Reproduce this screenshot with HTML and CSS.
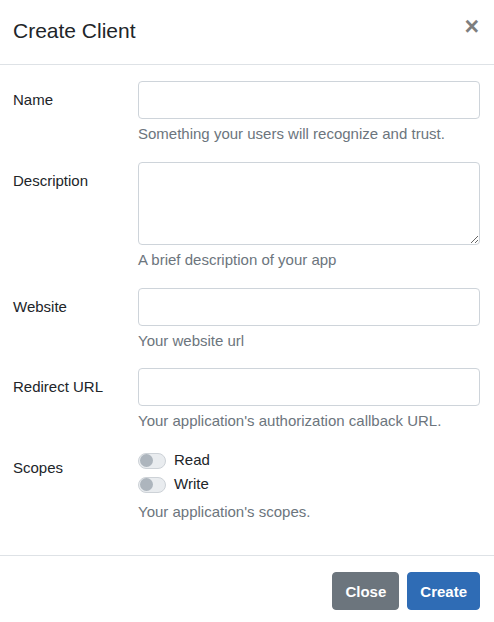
FILE: index.html
```html
<!DOCTYPE html>
<html lang="en">
<head>
<meta charset="utf-8">
<title>Create Client</title>
<link rel="stylesheet" href="styles.css">
</head>
<body>
<div class="modal">
  <div class="modal-header">
    <h5 class="modal-title">Create Client</h5>
    <button class="close" type="button" aria-label="Close">×</button>
  </div>
  <form class="modal-body">
    <div class="form-row">
      <label class="col-label" for="name">Name</label>
      <div class="field">
        <input id="name" class="form-control" type="text">
        <small class="help">Something your users will recognize and trust.</small>
      </div>
    </div>
    <div class="form-row">
      <label class="col-label" for="desc">Description</label>
      <div class="field">
        <textarea id="desc" class="form-control textarea"></textarea>
        <small class="help">A brief description of your app</small>
      </div>
    </div>
    <div class="form-row">
      <label class="col-label" for="site">Website</label>
      <div class="field">
        <input id="site" class="form-control" type="text">
        <small class="help">Your website url</small>
      </div>
    </div>
    <div class="form-row">
      <label class="col-label" for="redir">Redirect URL</label>
      <div class="field">
        <input id="redir" class="form-control" type="text">
        <small class="help">Your application's authorization callback URL.</small>
      </div>
    </div>
    <div class="form-row">
      <span class="col-label">Scopes</span>
      <div class="field">
        <label class="switch"><span class="track"><span class="knob"></span></span>Read</label>
        <label class="switch"><span class="track"><span class="knob"></span></span>Write</label>
        <small class="help">Your application's scopes.</small>
      </div>
    </div>
  </form>
  <div class="modal-footer">
    <button class="btn btn-secondary" type="button">Close</button>
    <button class="btn btn-primary" type="button">Create</button>
  </div>
</div>
</body>
</html>
```
FILE: styles.css
```css
* { box-sizing: border-box; }
html, body {
  margin: 0;
  background: #fff;
}
body {
  font-family: "Liberation Sans", Arial, sans-serif;
  font-size: 15px;
  line-height: 1.5;
  color: #212529;
}
.modal {
  width: 494px;
}
.modal-header {
  display: flex;
  align-items: flex-start;
  justify-content: space-between;
  padding: 16px 13px 18px 13px;
  border-bottom: 1px solid #dee2e6;
}
.modal-title {
  margin: 0;
  font-size: 21px;
  font-weight: 500;
  line-height: 30px;
}
.close {
  border: 0;
  background: transparent;
  padding: 0;
  margin: -2px 2px 0 0;
  font-family: "Liberation Sans", Arial, sans-serif;
  font-size: 25px;
  font-weight: 700;
  line-height: 1;
  color: #000;
  opacity: 0.5;
}
.modal-body {
  display: block;
  padding: 16px 14px 16px 13px;
}
.form-row {
  display: grid;
  grid-template-columns: 94px 1fr;
  column-gap: 31px;
  margin-bottom: 16px;
}
.col-label {
  padding-top: 8px;
  line-height: 22.5px;
}
.field {
  display: flex;
  flex-direction: column;
}
.form-control {
  display: block;
  width: 100%;
  height: 38px;
  padding: 6px 12px;
  font: inherit;
  color: #495057;
  background: #fff;
  border: 1px solid #ced4da;
  border-radius: 4px;
}
.textarea {
  height: 83.5px;
  resize: vertical;
}
.help {
  display: block;
  margin-top: 4px;
  font-size: 15px;
  line-height: 22.5px;
  color: #6c757d;
}
.switch {
  display: flex;
  align-items: center;
  height: 24px;
  gap: 8px;
}
.track {
  position: relative;
  display: block;
  width: 28px;
  height: 16px;
  border-radius: 8px;
  background: #e9ecef;
  border: 1px solid #cdd2d7;
}
.knob {
  position: absolute;
  top: 0.5px;
  left: 0.5px;
  width: 13px;
  height: 13px;
  border-radius: 50%;
  background: #adb5bd;
}
.modal-footer {
  display: flex;
  justify-content: flex-end;
  gap: 8px;
  padding: 16px 14px 16px 13px;
  border-top: 1px solid #dee2e6;
}
.btn {
  height: 38px;
  padding: 0 12px;
  border: 1px solid transparent;
  border-radius: 4px;
  font-family: "Liberation Sans", Arial, sans-serif;
  font-size: 15px;
  font-weight: 700;
  color: #fff;
}
.btn-secondary {
  background: #6c757d;
  border-color: #6c757d;
}
.btn-primary {
  background: #2f6cb5;
  border-color: #2f6cb5;
}
```
